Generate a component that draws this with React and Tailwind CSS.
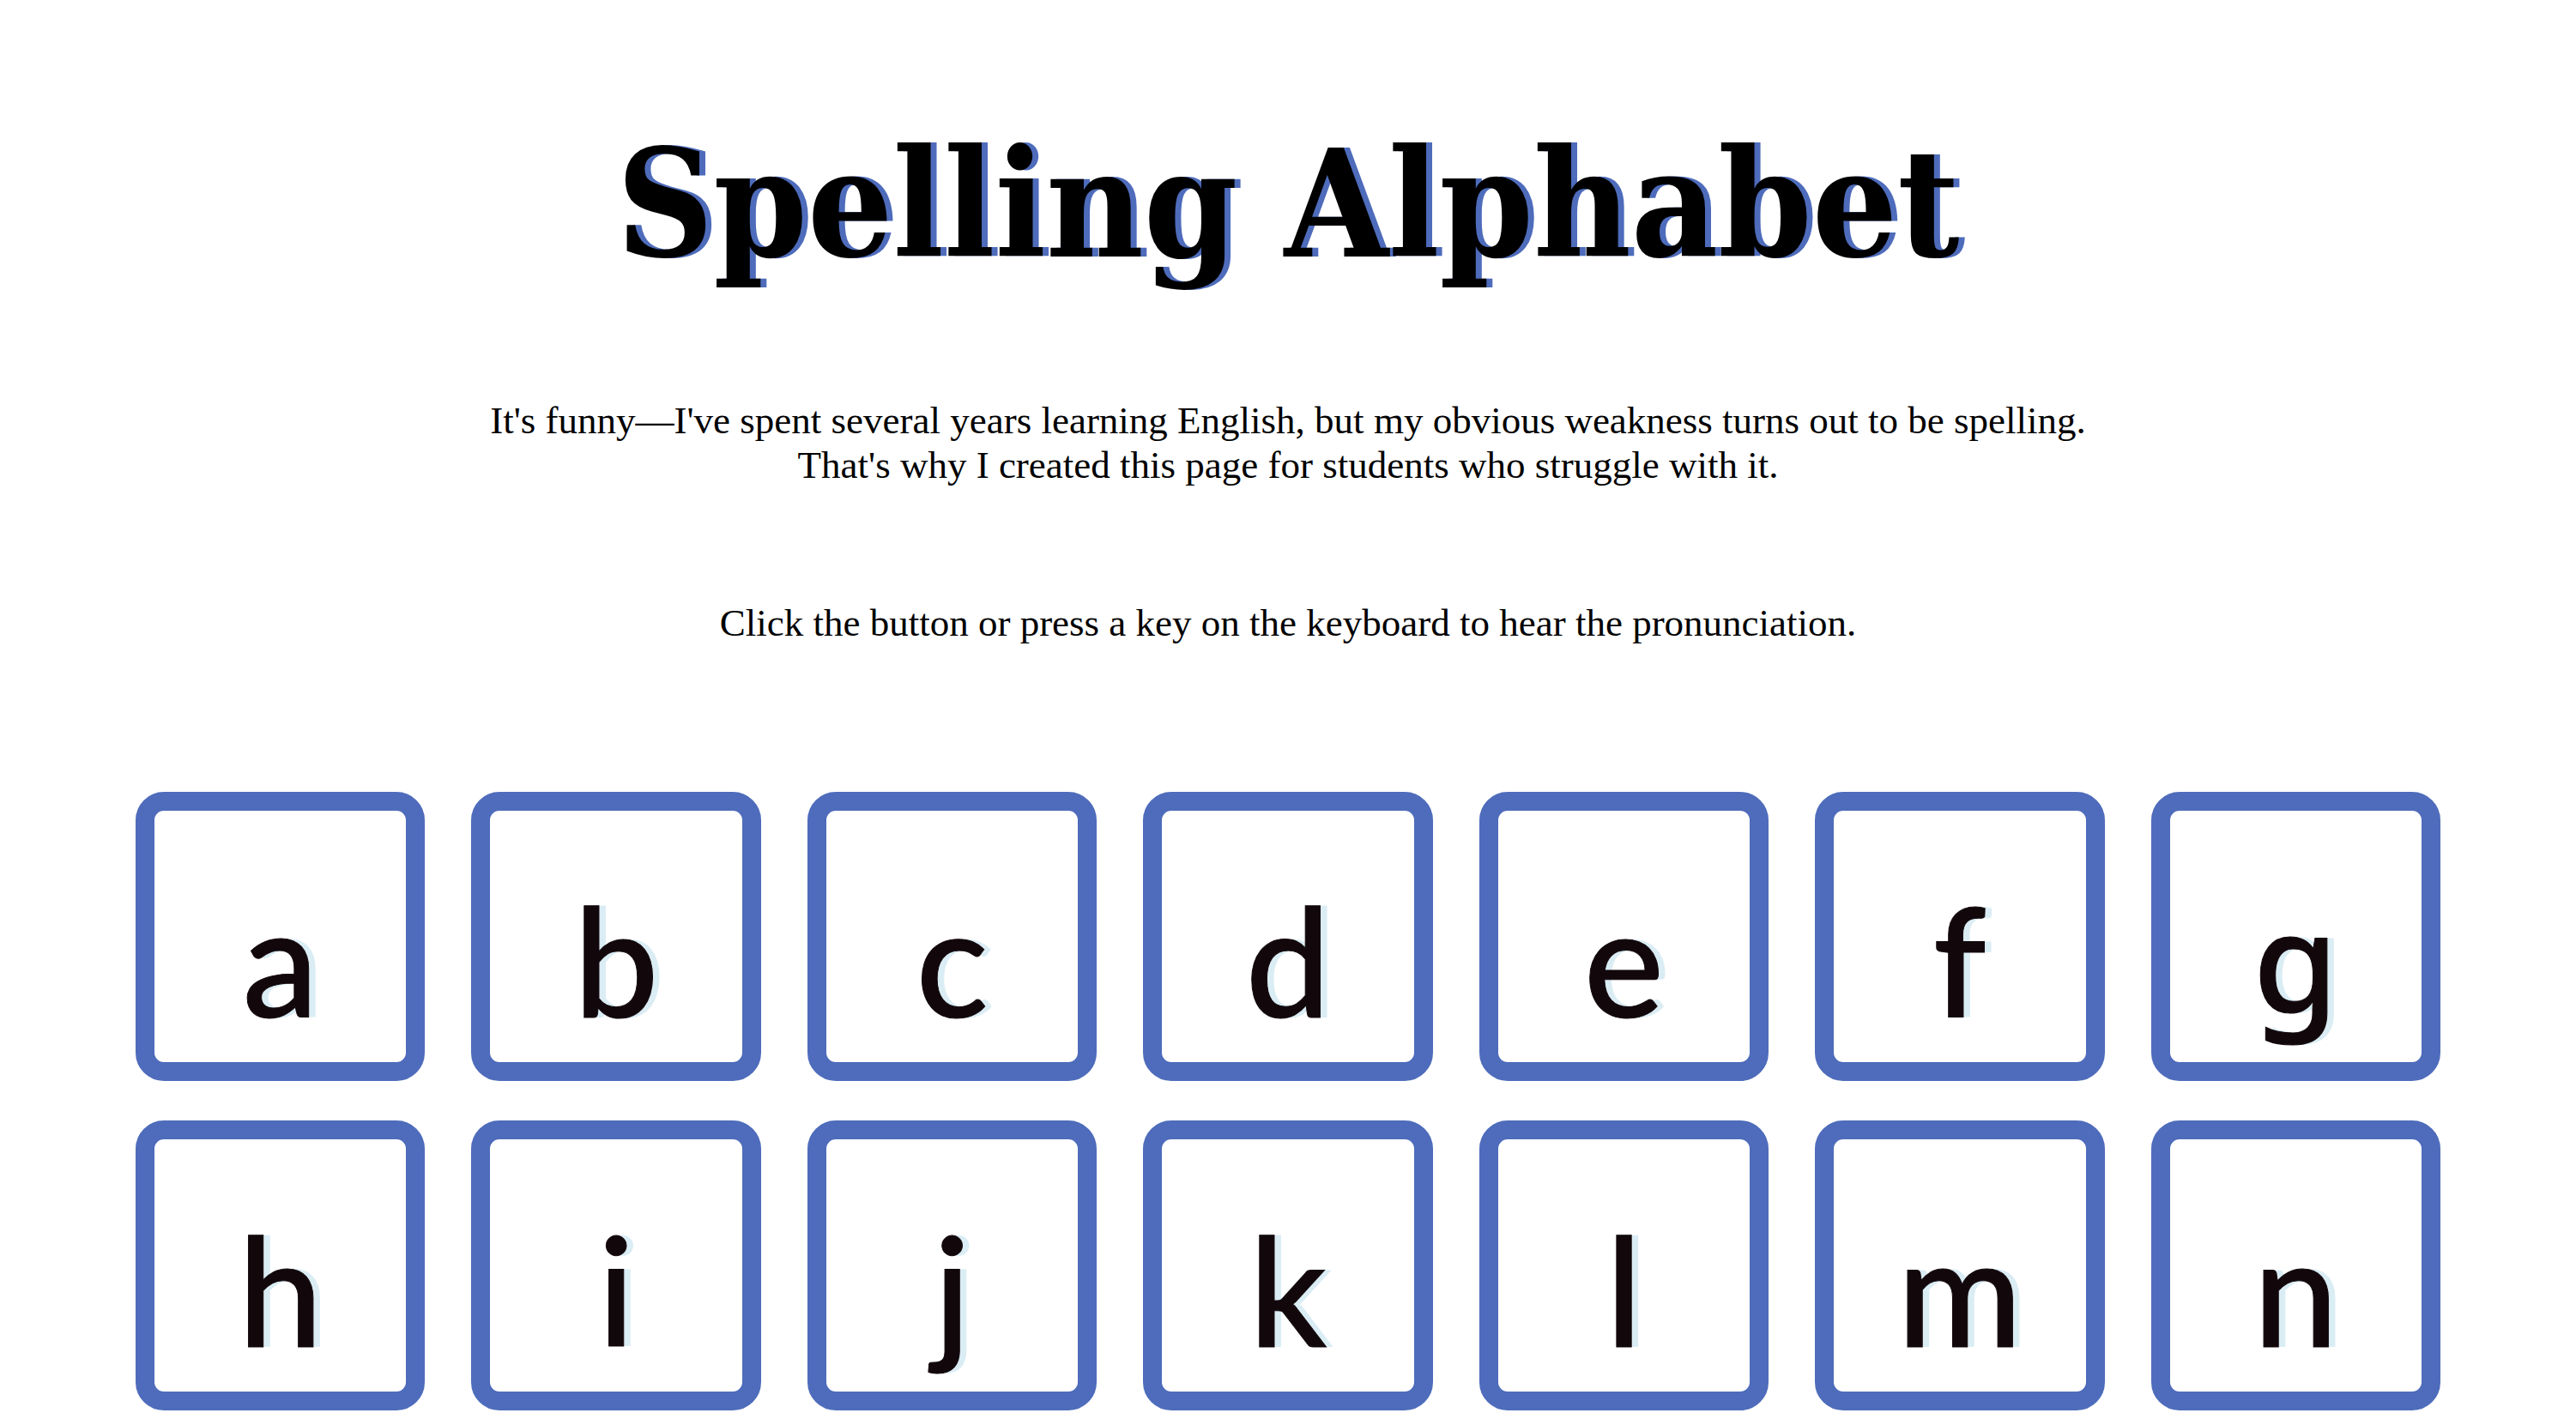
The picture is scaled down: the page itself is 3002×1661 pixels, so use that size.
const LETTERS = "abcdefghijklmn".split("");

function LetterButton({ letter }) {
  const face =
    letter === "g"
      ? "font-['Noto_Sans',sans-serif] text-[160px]"
      : "font-['Lato',sans-serif] text-[176px]";
  return (
    <button
      type="button"
      className={`flex aspect-square items-end justify-center rounded-[33px] border-[22px] border-[#4e6cbb] bg-white pb-5 leading-[200px] font-medium text-[#12080c] [-webkit-text-stroke:1px_#12080c] [text-shadow:8px_0_0_#dbedf4] ${face}`}
    >
      {letter}
    </button>
  );
}

export default function App() {
  return (
    <main className="min-h-screen bg-white px-[158px] pt-[118px] pb-4 text-center text-black">
      <h1 className="font-['DejaVu_Serif_Condensed','DejaVu_Serif',serif] text-[174px] leading-[240px] font-bold [text-shadow:7px_0_0_#4e6cbb]">
        Spelling Alphabet
      </h1>
      <div className="mt-[106px] font-['Liberation_Serif',serif] text-[45px] leading-[52px]">
        <p>
          It's funny—I've spent several years learning English, but my obvious weakness turns out to be spelling.
          <br />
          That's why I created this page for students who struggle with it.
        </p>
        <p className="mt-[132px]">Click the button or press a key on the keyboard to hear the pronunciation.</p>
      </div>
      <div className="mt-[171px] grid grid-cols-7 gap-x-[54px] gap-y-[46px]">
        {LETTERS.map((letter) => (
          <LetterButton key={letter} letter={letter} />
        ))}
      </div>
    </main>
  );
}
